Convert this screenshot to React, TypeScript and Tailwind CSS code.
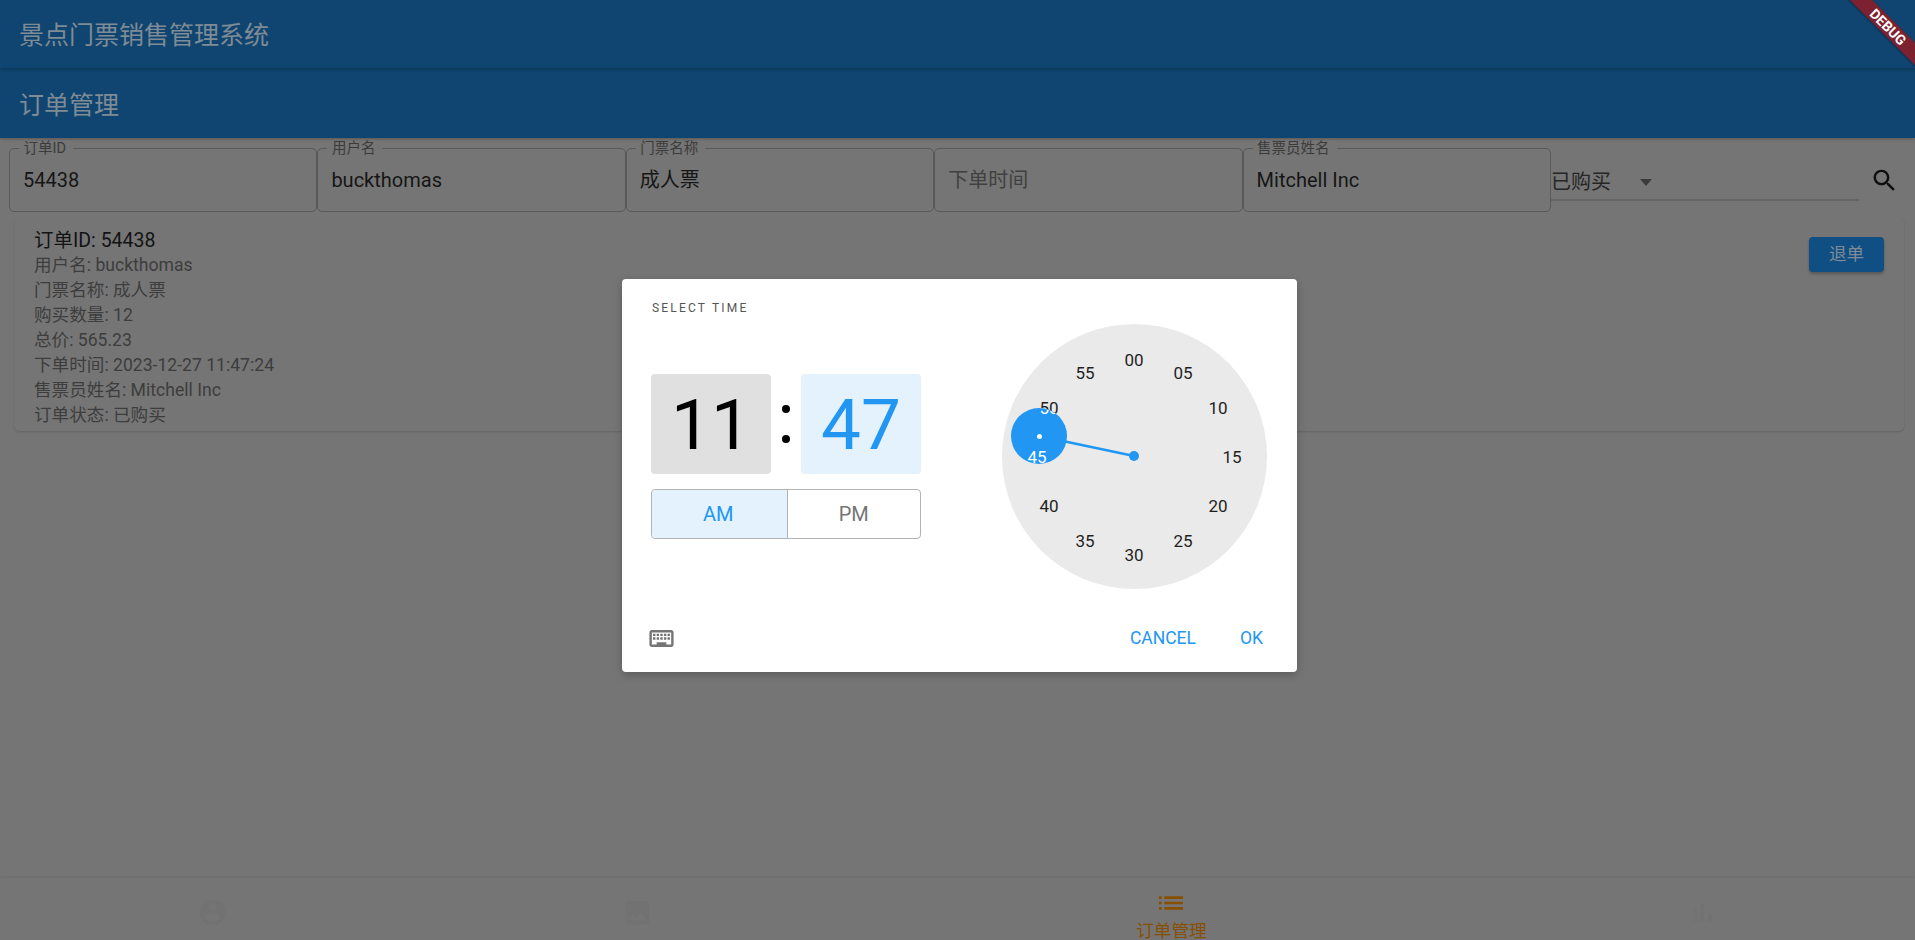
const fields = [
  { label: '订单ID', value: '54438' },
  { label: '用户名', value: 'buckthomas' },
  { label: '门票名称', value: '成人票' },
  { label: '', value: '下单时间', hint: true },
  { label: '售票员姓名', value: 'Mitchell Inc' },
];

const orderLines = ['用户名: buckthomas', '门票名称: 成人票', '购买数量: 12', '总价: 565.23', '下单时间: 2023-12-27 11:47:24', '售票员姓名: Mitchell Inc', '订单状态: 已购买'];

// dial labels, offsets from the dial's top left corner (center is 132,132)
const dialLabels = [
  { t: '00', x: 132, y: 36 },
  { t: '05', x: 181, y: 49 },
  { t: '10', x: 216, y: 84 },
  { t: '15', x: 230, y: 133 },
  { t: '20', x: 216, y: 182 },
  { t: '25', x: 181, y: 217 },
  { t: '30', x: 132, y: 231 },
  { t: '35', x: 83, y: 217 },
  { t: '40', x: 47, y: 182 },
  { t: '45', x: 35, y: 133 },
  { t: '50', x: 47, y: 84 },
  { t: '55', x: 83, y: 49 },
];

const Icon = ({ d, size, className }: { d: string; size: number; className?: string }) => (
  <svg width={size} height={size} viewBox="0 0 24 24" className={`shrink-0 ${className ?? ''}`}>
    <path fill="currentColor" d={d} />
  </svg>
);

const KEYBOARD = 'M20 7v10H4V7h16m0-2H4c-1.1 0-1.99.9-1.99 2L2 17c0 1.1.9 2 2 2h16c1.1 0 2-.9 2-2V7c0-1.1-.9-2-2-2zm-9 3h2v2h-2V8zm0 3h2v2h-2v-2zM8 8h2v2H8V8zm0 3h2v2H8v-2zm-1 2H5v-2h2v2zm0-3H5V8h2v2zm9 7H8v-2h8v2zm0-4h-2v-2h2v2zm0-3h-2V8h2v2zm3 3h-2v-2h2v2zm0-3h-2V8h2v2z';
const SEARCH = 'M15.5 14h-.79l-.28-.27C15.41 12.59 16 11.11 16 9.5 16 5.91 13.09 3 9.5 3S3 5.91 3 9.5 5.91 16 9.5 16c1.61 0 3.09-.59 4.23-1.57l.27.28v.79l5 4.99L20.49 19l-4.99-5zm-6 0C7.01 14 5 11.99 5 9.5S7.01 5 9.5 5 14 7.01 14 9.5 11.99 14 9.5 14z';
const LIST = 'M3 13h2v-2H3v2zm0 4h2v-2H3v2zm0-8h2V7H3v2zm4 4h14v-2H7v2zm0 4h14v-2H7v2zM7 7v2h14V7H7z';
const ACCOUNT = 'M12 2C6.48 2 2 6.48 2 12s4.48 10 10 10 10-4.48 10-10S17.52 2 12 2zm0 3c1.66 0 3 1.34 3 3s-1.34 3-3 3-3-1.34-3-3 1.34-3 3-3zm0 14.2c-2.5 0-4.71-1.28-6-3.22.03-1.99 4-3.08 6-3.08 1.99 0 5.97 1.09 6 3.08-1.29 1.94-3.5 3.22-6 3.22z';
const IMAGE = 'M21 19V5c0-1.1-.9-2-2-2H5c-1.1 0-2 .9-2 2v14c0 1.1.9 2 2 2h14c1.1 0 2-.9 2-2zM8.5 13.5l2.5 3.01L14.5 12l4.5 6H5l3.5-4.5z';
const CHART = 'M5 9.2h3V19H5zM10.6 5h2.8v14h-2.8zm5.6 8H19v6h-2.8z';

const Dial = () => (
  <div className="relative w-[265px] h-[265px] rounded-full bg-[#eaeaea] text-[17px] leading-none text-[#1f1f1f]">
    {dialLabels.map((l) => (
      <span key={l.t} className="absolute -translate-x-1/2 -translate-y-1/2" style={{ left: l.x, top: l.y }}>
        {l.t}
      </span>
    ))}
    {/* hand */}
    <svg className="absolute inset-0" width="265" height="265">
      <line x1="37" y1="112" x2="132" y2="132" stroke="#2196f3" strokeWidth="2.5" />
      <circle cx="132" cy="132" r="5" fill="#2196f3" />
    </svg>
    {/* selector, labels under it turn white */}
    <div className="absolute left-[9px] top-[84px] w-[56px] h-[56px] rounded-full bg-[#2196f3] overflow-hidden text-white">
      <span className="absolute -translate-x-1/2 -translate-y-1/2" style={{ left: 26, top: 49 }}>45</span>
      <span className="absolute -translate-x-1/2 -translate-y-1/2" style={{ left: 38, top: 0 }}>50</span>
      <span className="absolute left-[25.5px] top-[25.5px] w-[5px] h-[5px] rounded-full bg-white" />
    </div>
  </div>
);

const TimeDialog = () => (
  <div className="absolute inset-0 z-10 flex items-start justify-center pl-[4px] pt-[279px]">
    <div className="w-[675px] h-[393px] bg-white rounded-[4px] shadow-[0_3px_8px_rgba(0,0,0,0.22)] flex flex-col">
      <div className="flex flex-1">
        <div className="w-[300px] ml-[29px] flex flex-col">
          <div className="mt-[23px] ml-[1px] text-[12px] leading-[12px] tracking-[2.2px] text-[#555555]">SELECT TIME</div>
          <div className="mt-[60px] flex items-center">
            <div className="w-[120px] h-[100px] rounded-[4px] bg-[#e0e0e0] flex items-center justify-center text-[71px] leading-none text-black">11</div>
            <div className="w-[30px] flex flex-col items-center gap-[22px]">
              <span className="w-[8px] h-[8px] rounded-full bg-black" />
              <span className="w-[8px] h-[8px] rounded-full bg-black" />
            </div>
            <div className="w-[120px] h-[100px] rounded-[4px] bg-[#e3f2fd] flex items-center justify-center text-[71px] leading-none text-[#2196f3]">47</div>
          </div>
          <div className="mt-[15px] w-[270px] h-[50px] flex rounded-[4px] border border-[#b3b3b3] text-[20px]">
            <div className="flex-1 rounded-l-[4px] bg-[#e3f2fd] text-[#2196f3] flex items-center justify-center border-r border-[#b3b3b3] pr-[2px]">AM</div>
            <div className="flex-1 text-[#757575] flex items-center justify-center">PM</div>
          </div>
        </div>
        <div className="ml-[51px] mt-[45px]">
          <Dial />
        </div>
      </div>
      <div className="flex items-center h-[50px] mb-[9px] pl-[25px] text-[#2196f3] text-[17.5px]">
        <Icon d={KEYBOARD} size={29} className="text-[#757575]" />
        <span className="ml-auto">CANCEL</span>
        <span className="ml-[44px] mr-[34px]">OK</span>
      </div>
    </div>
  </div>
);

export default function App() {
  return (
    <div className="relative w-[1915px] h-[940px] overflow-hidden bg-[#757575] font-['Roboto','Noto_Sans_CJK_SC',sans-serif] flex flex-col">
      <header className="relative z-[1] h-[68px] shrink-0 bg-[#0f4570] flex items-center pl-[19px] pt-[4px] text-[25px] text-[#7f8b95] shadow-[0_2px_3px_rgba(0,0,0,0.18)]">
        景点门票销售管理系统
      </header>
      <div className="h-[70px] shrink-0 bg-[#0f4570] flex items-center pl-[19px] pt-[6px] text-[25px] text-[#7f8b95] shadow-[0_1px_3px_rgba(0,0,0,0.25)]">
        订单管理
      </div>

      <div className="flex pl-[9px] mt-[10px] h-[64px]">
        {fields.map((f, i) => (
          <div key={i} className="relative w-[308.4px] h-[64px] border-[1.5px] border-[#595959] rounded-[5px] flex items-center pl-[13px] text-[20px] text-[#161616]">
            {f.label && (
              <span className="absolute left-[9px] -top-[8px] bg-[#757575] pl-[4.5px] pr-[7px] text-[14.5px] leading-[16px] text-[#3b3b3b]">{f.label}</span>
            )}
            <span className={f.hint ? 'text-[#404040]' : ''}>{f.value}</span>
          </div>
        ))}
        <div className="w-[308px] h-[53px] border-b-[2px] border-[#656565] flex items-center text-[20px] text-[#262626] pt-[17px]">
          已购买
          <span className="ml-[29px] w-0 h-0 border-x-[6px] border-x-transparent border-t-[7px] border-t-[#3b3b3b]" />
        </div>
        <Icon d={SEARCH} size={29} className="ml-[11px] mt-[18px] text-[#0f0f0f]" />
      </div>

      <div className="ml-[14px] mt-[6px] h-[213px] w-[1890px] rounded-[5px] bg-[#757575] shadow-[0_1px_2px_rgba(0,0,0,0.15)] flex justify-between pl-[20px] pr-[20px] pt-[10px]">
        <div className="flex flex-col">
          <div className="text-[19.5px] leading-[25px] text-[#131313]">订单ID: 54438</div>
          {orderLines.map((l) => (
            <div key={l} className="text-[17.6px] leading-[25px] text-[#3d3d3d]">{l}</div>
          ))}
        </div>
        <button className="mt-[9px] w-[75px] h-[35px] rounded-[4px] bg-[#0f4f84] text-[#7f8b95] text-[17.6px] shadow-[0_2px_3px_rgba(0,0,0,0.25)]">退单</button>
      </div>

      <nav className="absolute left-0 right-0 bottom-0 h-[62px] bg-[#757575] shadow-[0_-1px_2px_rgba(0,0,0,0.08)] flex">
        <div className="flex-[2] flex justify-center pt-[19px] text-[#727272]"><Icon d={ACCOUNT} size={31} /></div>
        <div className="flex-[2] flex justify-center pt-[19px] text-[#727272]"><Icon d={IMAGE} size={31} /></div>
        <div className="flex-[3] flex flex-col items-center pt-[9px] pl-[3px] text-[#875000]">
          <Icon d={LIST} size={32} />
          <span className="shrink-0 text-[17.6px] leading-[24px]">订单管理</span>
        </div>
        <div className="flex-[2] flex justify-center pt-[19px] text-[#727272]"><Icon d={CHART} size={31} /></div>
      </nav>

      <TimeDialog />

      {/* debug banner */}
      <div className="absolute z-20 top-[19px] -right-[48px] w-[150px] h-[16px] rotate-45 bg-[#7d2030] flex items-center justify-center text-white text-[14px] font-bold leading-none shadow-[0_1px_2px_rgba(0,0,0,0.3)]">
        DEBUG
      </div>
    </div>
  );
}
